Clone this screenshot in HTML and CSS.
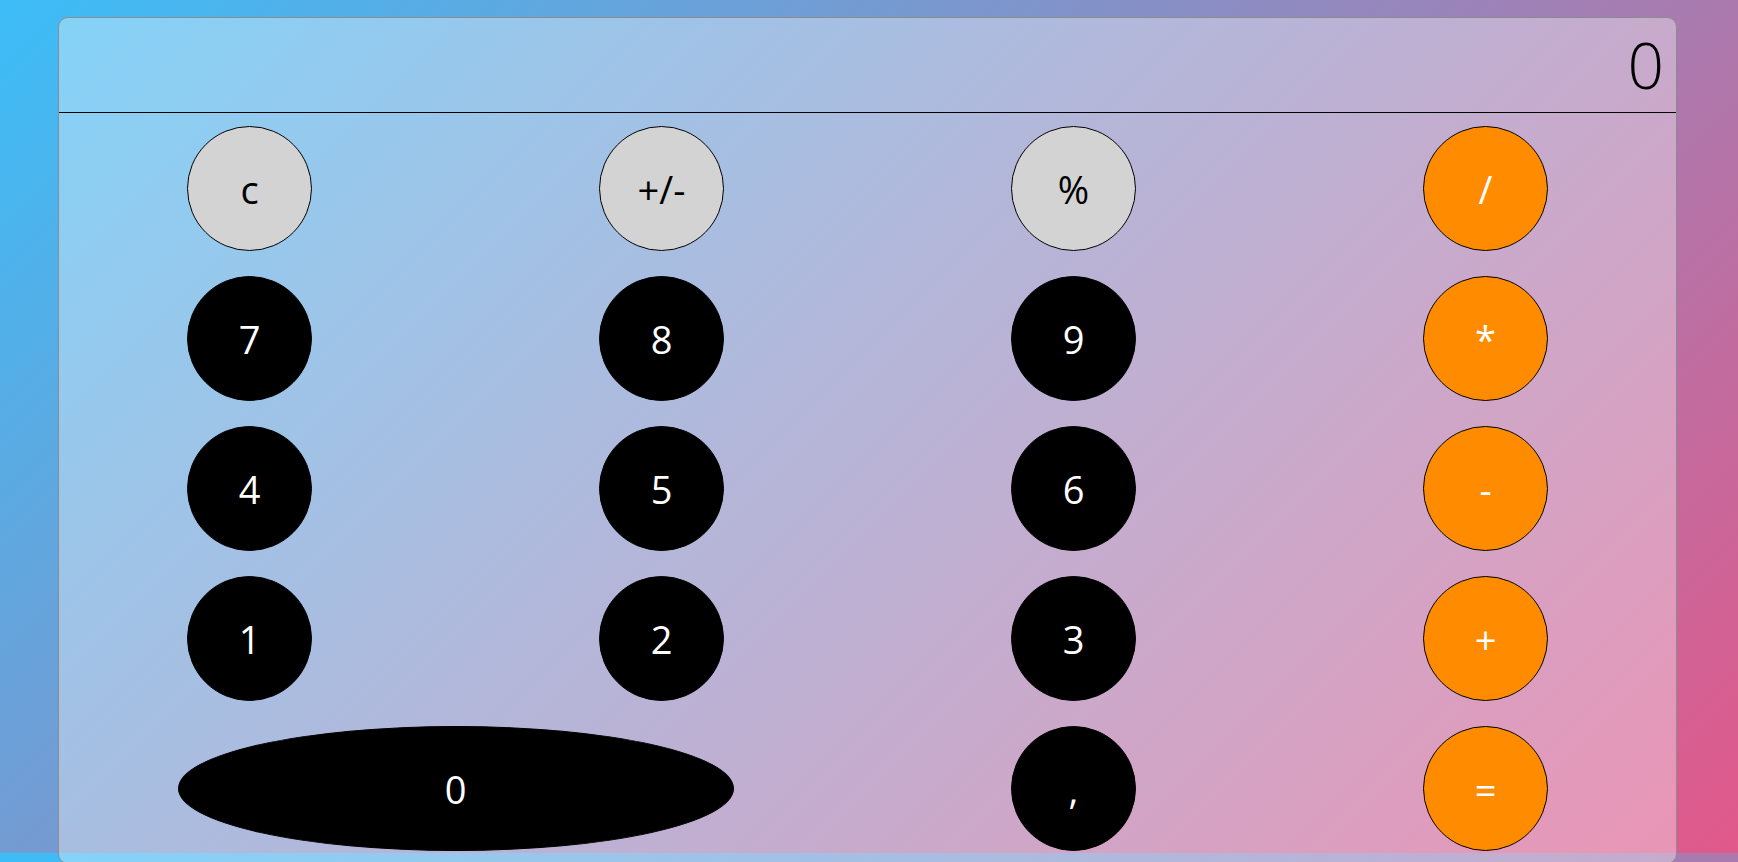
FILE: index.html
```html
<!DOCTYPE html>
<html lang="en">
<head>
  <meta charset="UTF-8">
  <meta name="viewport" content="width=device-width,initial-scale=1.0">
  <title>Calculator</title>
  <link rel="stylesheet" href="styles.css">
</head>
<body>

  <div class="calculator">
    <div class="display" id="display">0</div>

    <div class="keys">
      <button class="key fn">c</button>
      <button class="key fn">+/-</button>
      <button class="key fn">%</button>
      <button class="key op">/</button>

      <button class="key">7</button>
      <button class="key">8</button>
      <button class="key">9</button>
      <button class="key op">*</button>

      <button class="key">4</button>
      <button class="key">5</button>
      <button class="key">6</button>
      <button class="key op">-</button>

      <button class="key">1</button>
      <button class="key">2</button>
      <button class="key">3</button>
      <button class="key op">+</button>

      <button class="key zero">0</button>
      <button class="key">,</button>
      <button class="key op">=</button>
    </div>
  </div>

</body>
</html>
```

FILE: styles.css
```css
*{box-sizing:border-box;margin:0;padding:0}
body{
  background:linear-gradient(135deg,#3cbdf7,#e2588a);
  background-size:100% 853px;
  font-family:"Open Sans",sans-serif;
  overflow:hidden;
}
/* card */
.calculator{
  width:1619px;
  margin:17px 0 0 58px;
  border:1px solid #8c8c8c;
  border-radius:10px;
  background:rgba(255,255,255,.36);
  padding-bottom:12px;
}
/* display */
.display{
  height:95px;
  line-height:94px;
  border-bottom:1px solid #000;
  padding:0 12px;
  text-align:right;
  font-size:64px;
  font-weight:350;
  color:#000;
}
/* keypad */
.keys{
  display:grid;
  grid-template-columns:repeat(4,144px);
  grid-auto-rows:125px;
  column-gap:268px;
  row-gap:25px;
  justify-content:center;
  padding-top:13px;
}
.key{
  width:125px;
  height:125px;
  justify-self:center;
  border:1px solid #000;
  border-radius:50%;
  background:#000;
  color:#fff;
  font-family:inherit;
  font-size:38px;
  cursor:pointer;
}
.key.fn{background:#d3d3d3;color:#000}
.key.op{background:#ff8c00}
.key.zero{grid-column:span 2;width:100%}
```
